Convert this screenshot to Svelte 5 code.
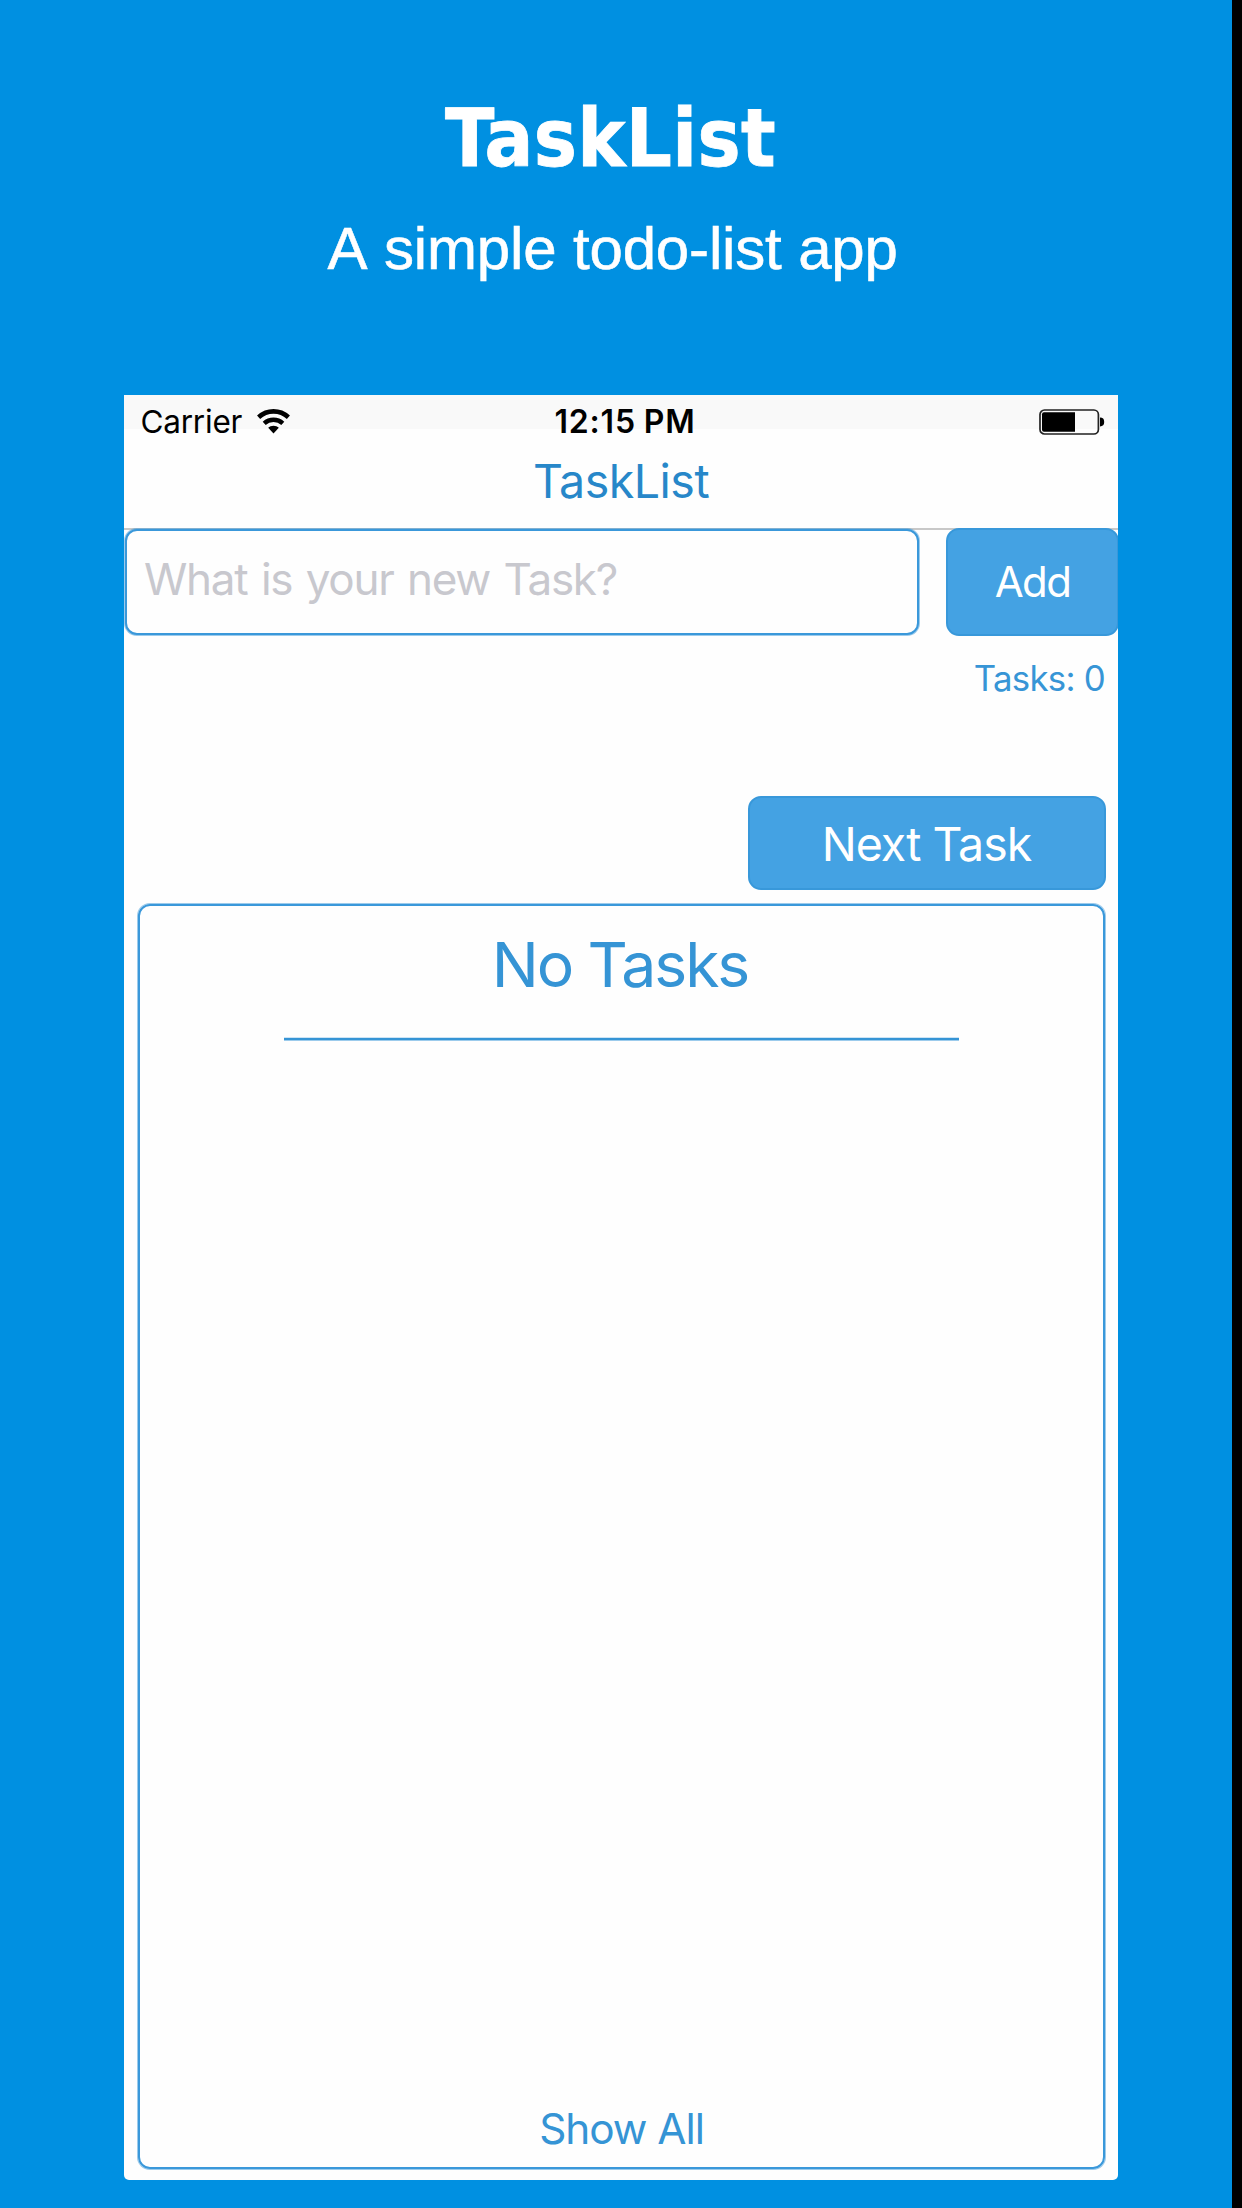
<script>
  let draft = $state('');
  let count = $state(0);
</script>

<main class="page">
  <h1>TaskList</h1>
  <p class="tagline">A simple todo-list app</p>

  <section class="phone">
    <header class="top">
      <div class="status">
        <div class="carrier">
          <span>Carrier</span>
          <svg class="wifi" viewBox="0 0 33 25" aria-hidden="true">
            <path d="M1.6 8.2 C10.2 0.4 22.8 0.4 31.4 8.2" fill="none" stroke="#000" stroke-width="4.6" />
            <path d="M7.2 14.3 C12.4 9.5 20.6 9.5 25.8 14.3" fill="none" stroke="#000" stroke-width="4.4" />
            <path d="M11.2 18.8 C13.6 15.9 19.4 15.9 21.8 18.8 L16.5 24.4 Z" />
          </svg>
        </div>
        <span class="clock">12:15 PM</span>
        <svg class="battery" viewBox="0 0 66 26" aria-hidden="true">
          <rect x="1" y="1" width="58.4" height="24" rx="4.5" fill="none" stroke="#222" stroke-width="1.7" />
          <path d="M5 3.2 H36 V22.8 H5 Q3 22.8 3 20.8 V5.2 Q3 3.2 5 3.2 Z" />
          <path d="M61 8.6 Q65.2 8.6 65.2 13 Q65.2 17.4 61 17.4 Z" />
        </svg>
      </div>
      <h2>TaskList</h2>
    </header>

    <div class="entry">
      <input class="field" bind:value={draft} placeholder="What is your new Task?" />
      <button class="btn add" onclick={() => (count += 1)}>Add</button>
    </div>

    <p class="count">Tasks: {count}</p>
    <button class="btn next">Next Task</button>

    <div class="card">
      <h3>No Tasks</h3>
      <hr />
      <button class="all">Show All</button>
    </div>
  </section>
</main>

<style>
  :global(body) { background: #0090e1; }
  .page {
    box-sizing: border-box;
    height: 2208px;
    padding: 88px 0 0 124px;
    border-right: 10px solid #000;
    background: #0090e1;
    overflow: hidden;
  }
  h1, h2, h3, p { margin: 0; font-weight: 400; white-space: nowrap; }
  h1 {
    margin-left: 321px;
    font: 700 80.5px/100px "DejaVu Sans Condensed", "DejaVu Sans", sans-serif;
    letter-spacing: 0.4px;
    color: #fff;
    -webkit-text-stroke: 0.8px #fff;
  }
  .tagline {
    margin: 26px 0 0 203.5px;
    font: 60px/70px "Liberation Sans", Arial, sans-serif;
    font-kerning: none;
    letter-spacing: -0.15px;
    color: #fff;
    -webkit-text-stroke: 0.6px #fff;
  }
  .phone {
    display: flex;
    flex-direction: column;
    box-sizing: border-box;
    width: 994px;
    height: 1785px;
    margin-top: 111px;
    padding-bottom: 10px;
    background: #fefefe;
    border-radius: 0 0 5px 5px;
    overflow: hidden;
    font-family: Inter, "Liberation Sans", sans-serif;
  }
  .top {
    flex: none;
    box-sizing: border-box;
    height: 135px;
    border-bottom: 2px solid #c8c8c8;
    background: linear-gradient(#f9f9f9 34px, #fefefe 34px);
  }
  .status {
    display: grid;
    grid-template-columns: 414px 1fr auto;
    align-items: center;
    height: 54px;
    padding: 0 13px 0 16.5px;
    line-height: 54px;
    color: #000;
  }
  .carrier { display: flex; align-items: center; gap: 15px; font-size: 31.5px; letter-spacing: -0.23px; }
  .wifi { width: 33px; height: 25px; margin-top: -2px; }
  .clock { font-size: 32px; font-weight: 600; letter-spacing: 0.8px; word-spacing: -1px; }
  .battery { width: 66px; height: 26px; margin-top: -1px; }
  h2 {
    margin: 2px 0 0 409px;
    font-size: 46.5px;
    line-height: 60px;
    letter-spacing: -0.5px;
    color: #2787c9;
  }
  .entry { display: flex; gap: 26px; height: 108px; margin: -2px -1px 0 0; flex: none; }
  .field {
    box-sizing: border-box;
    width: 794px;
    margin: 1px;
    padding: 0 17px 6px;
    border: 2px solid #3a98da;
    border-radius: 12px;
    box-shadow: 0 0 0 1px rgba(58, 152, 218, 0.5);
    outline: none;
    background: #fefefe;
    font: 44px/60px Inter, "Liberation Sans", sans-serif;
    letter-spacing: -1.25px;
    word-spacing: 2.3px;
    color: #2787c9;
  }
  .field::placeholder { color: #c8c8ce; opacity: 1; }
  .btn {
    box-sizing: border-box;
    padding: 0;
    border: 2px solid #3898da;
    border-radius: 13px;
    background: #44a2e3;
    color: #fff;
    font-family: inherit;
    font-weight: 400;
  }
  .add { flex: 1; padding-bottom: 2px; font-size: 42px; letter-spacing: -1.6px; }
  .count {
    margin: 22px 13px 0 0;
    text-align: right;
    font-size: 34.8px;
    line-height: 40px;
    letter-spacing: -0.73px;
    color: #3795d6;
  }
  .next {
    flex: none;
    align-self: flex-end;
    width: 358px;
    height: 94px;
    margin: 98px 12px 0 0;
    padding: 1px 1px 0 0;
    font-size: 46.5px;
    letter-spacing: -0.99px;
  }
  .card {
    flex: 1;
    display: flex;
    flex-direction: column;
    align-items: center;
    box-sizing: border-box;
    margin: 14px 13px 1px 14px;
    border: 2px solid #3a98da;
    border-radius: 12px;
    box-shadow: 0 0 0 1px rgba(58, 152, 218, 0.5);
  }
  h3 {
    margin: 18px 3px 0 0;
    font-size: 62.5px;
    line-height: 80px;
    letter-spacing: -2.1px;
    color: #3594d5;
  }
  hr {
    width: 675px;
    height: 2px;
    margin: 34px 0 auto;
    border: 0;
    background: #3594d5;
    box-shadow: 0 1px rgba(58, 152, 218, 0.5), 0 -1px rgba(58, 152, 218, 0.25);
  }
  .all {
    margin-bottom: 11px;
    padding: 0;
    border: 0;
    background: none;
    font: 42.3px/54px Inter, "Liberation Sans", sans-serif;
    letter-spacing: -1.03px;
    color: #3594d5;
  }
</style>
